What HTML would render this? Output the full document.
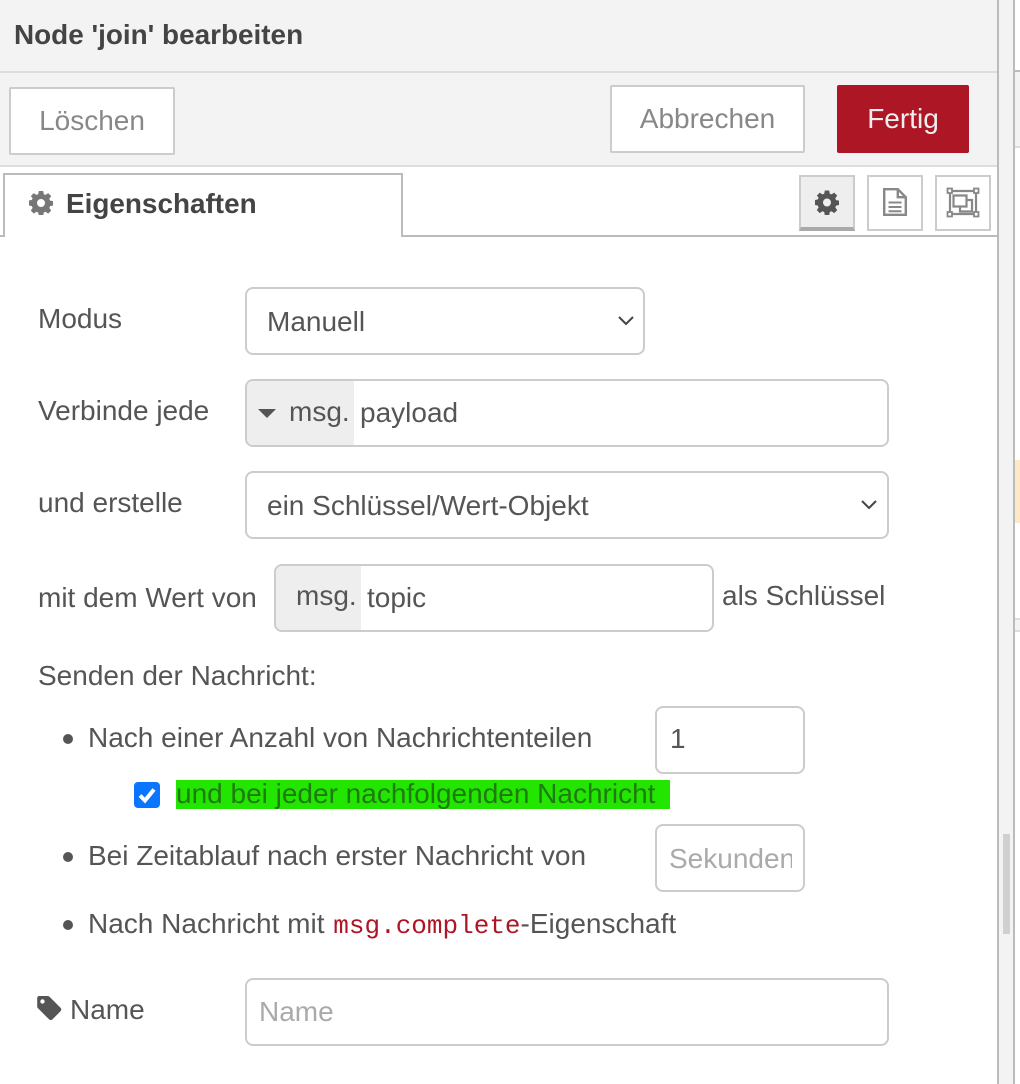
<!DOCTYPE html>
<html><head><meta charset="utf-8"><style>
html,body{margin:0;padding:0;background:#fff}
#r{position:relative;width:1020px;height:1084px;overflow:hidden;background:#fff;font-family:"Liberation Sans",sans-serif;font-size:28px;color:#555}
#r div,#r svg,#r span.a{position:absolute;box-sizing:border-box}
.t{white-space:nowrap;line-height:32px}
.box{border:2px solid #ccc;border-radius:8px;background:#fff}
.btn{border:2px solid #ccc;background:#fff;color:#888;text-align:center;border-radius:2px}
.tb{border:2px solid #ccc;background:#fff;width:56px;height:56px;top:175px}
</style></head><body><div id="r">
<div style="left:0;top:0;width:997px;height:166px;background:#f3f3f3"></div>
<div style="left:0;top:71px;width:997px;height:2px;background:#ddd"></div>
<div style="left:0;top:165px;width:997px;height:2px;background:#ddd"></div>
<div class="t" style="left:14px;top:19px;font-weight:bold;font-size:27.9px;color:#444">Node 'join' bearbeiten</div>
<div class="btn t" style="left:9px;top:87px;width:166px;height:68px;line-height:64px">Löschen</div>
<div class="btn t" style="left:610px;top:85px;width:195px;height:68px;line-height:64px">Abbrechen</div>
<div class="t" style="left:837px;top:85px;width:132px;height:68px;line-height:68px;background:#ad1625;color:#eee;text-align:center;border-radius:2px">Fertig</div>

<div style="left:0;top:235px;width:997px;height:2px;background:#bbb"></div>
<div style="left:3px;top:173px;width:400px;height:64px;border:2px solid #bbb;border-bottom:none;background:#fff"></div>
<svg style="left:29px;top:191px" width="24" height="24" viewBox="0 0 24 24"><path fill="#777" fill-rule="evenodd" d="M9.8 0h4.400l.6 3.200 1.700.7 2.700-1.800 3 3-1.900 2.700.8 1.800 3 .6v4.300l-3 .6-.8 1.800 1.900 2.700-3 3-2.700-1.900-1.700.8-.6 3H9.800l-.6-3-1.800-.8-2.600 1.900-3-3 1.800-2.700-.7-1.800-3-.6V9.500l3-.6.7-1.800L1.800 5.100l3-3 2.600 1.800 1.800-.7zM12 8a4 4 0 1 0 0 8 4 4 0 0 0 0-8z"/></svg>
<div class="t" style="left:66px;top:188px;font-weight:bold;font-size:27.9px;color:#444">Eigenschaften</div>

<div class="tb" style="left:799px;background:#eee;border-bottom:4px solid #aaa"></div>
<svg style="left:815px;top:190px" width="24" height="25" viewBox="0 0 24 24"><path fill="#555" fill-rule="evenodd" d="M9.800 0h4.400l.6 3.200 1.700.7 2.700-1.800 3 3-1.900 2.700.8 1.800 3 .6v4.300l-3 .6-.8 1.800 1.900 2.700-3 3-2.700-1.900-1.700.8-.6 3H9.800l-.6-3-1.800-.8-2.600 1.900-3-3 1.800-2.700-.7-1.800-3-.6V9.500l3-.6.7-1.800L1.800 5.100l3-3 2.600 1.800 1.800-.7zM12 8a4 4 0 1 0 0 8 4 4 0 0 0 0-8z"/></svg>
<div class="tb" style="left:867px"></div>
<svg style="left:882px;top:187px" width="26" height="30" viewBox="0 0 26 30" fill="none" stroke="#888" stroke-width="2.400"><path d="M2.200 2.200h13.600l8 8v17.600H2.200zM15.800 2.200v8h8"/><path d="M6.500 15.500h13M6.500 20h13M6.500 24.200h13" stroke-width="2"/></svg>
<div class="tb" style="left:935px"></div>
<svg style="left:946px;top:187px" width="34" height="31" viewBox="0 0 34 31" fill="none" stroke="#888" stroke-width="2.200"><path d="M4 4h26v23H4z"/><path d="M7.500 8.500h13v11h-13z"/><path d="M14 19.500v5h12V13h-5.500"/><g fill="#fff" stroke-width="1.800"><rect x="1.500" y="1.500" width="4.500" height="4.500"/><rect x="28" y="1.500" width="4.500" height="4.500"/><rect x="1.500" y="25" width="4.500" height="4.500"/><rect x="28" y="25" width="4.500" height="4.500"/></g></svg>

<div class="t" style="left:38px;top:303px">Modus</div>
<div class="box t" style="left:245px;top:287px;width:400px;height:68px;padding-left:20px;line-height:66px">Manuell</div>
<svg style="left:617px;top:315px" width="18" height="12" viewBox="0 0 18 12" fill="none" stroke="#444" stroke-width="2"><path d="M2 2l7 7 7-7"/></svg>

<div class="t" style="left:38px;top:395px">Verbinde jede</div>
<div class="box t" style="left:245px;top:379px;width:644px;height:68px;padding-left:113px;line-height:64px">payload</div>
<div style="left:247px;top:381px;width:107px;height:64px;background:#eee;border-radius:6px 0 0 6px"></div>
<svg style="left:258px;top:408px" width="18" height="11" viewBox="0 0 18 11"><path fill="#555" d="M0 1h18L9 10z"/></svg>
<div class="t" style="left:289px;top:396px">msg.</div>

<div class="t" style="left:38px;top:487px">und erstelle</div>
<div class="box t" style="left:245px;top:471px;width:644px;height:68px;padding-left:20px;line-height:66px">ein Schlüssel/Wert-Objekt</div>
<svg style="left:860px;top:499px" width="18" height="12" viewBox="0 0 18 12" fill="none" stroke="#444" stroke-width="2"><path d="M2 2l7 7 7-7"/></svg>

<div class="t" style="left:38px;top:582px">mit dem Wert von</div>
<div class="box t" style="left:274px;top:564px;width:440px;height:68px;padding-left:91px;line-height:63px">topic</div>
<div style="left:276px;top:566px;width:85px;height:64px;background:#eee;border-radius:6px 0 0 6px"></div>
<div class="t" style="left:296px;top:580px">msg.</div>
<div class="t" style="left:722px;top:580px">als Schlüssel</div>

<div class="t" style="left:38px;top:660px">Senden der Nachricht:</div>

<div style="left:63px;top:734px;width:10px;height:10px;border-radius:50%;background:#555"></div>
<div class="t" style="left:88px;top:722px">Nach einer Anzahl von Nachrichtenteilen</div>
<div class="box t" style="left:655px;top:706px;width:150px;height:68px;padding-left:13px;line-height:62px">1</div>

<div style="left:134px;top:782px;width:26px;height:26px;background:#0a75ff;border-radius:4px"></div>
<svg style="left:134px;top:782px" width="26" height="26" viewBox="0 0 26 26" fill="none" stroke="#fff" stroke-width="4"><path d="M6 13.500l5 5 9-11"/></svg>
<div class="t" style="left:176px;top:780px;width:494px;height:29px;line-height:28px;background:#23e600;color:#1f7a10">und bei jeder nachfolgenden Nachricht</div>

<div style="left:63px;top:852px;width:10px;height:10px;border-radius:50%;background:#555"></div>
<div class="t" style="left:88px;top:840px">Bei Zeitablauf nach erster Nachricht von</div>
<div class="box" style="left:655px;top:824px;width:150px;height:68px"></div>
<div class="t" style="left:669px;top:843px;width:123px;overflow:hidden;color:#aaa">Sekunden</div>

<div style="left:63px;top:920px;width:10px;height:10px;border-radius:50%;background:#555"></div>
<div class="t" style="left:88px;top:908px">Nach Nachricht mit <span style="font-family:'Liberation Mono',monospace;font-size:26px;color:#ad1625;margin-left:1px">msg.complete</span>-Eigenschaft</div>

<svg style="left:37px;top:996px" width="25" height="25" viewBox="0 0 25 25"><path fill="#555" fill-rule="evenodd" d="M2 0h8.500c.8 0 1.500.3 2 .8l11 11c1 1 1 2.500 0 3.500l-8 8c-1 1-2.500 1-3.500 0l-11-11c-.5-.5-.8-1.200-.8-2V2c0-1.100.9-2 2-2zM5.500 3.300a2.200 2.200 0 1 0 0 4.400 2.200 2.200 0 0 0 0-4.400z"/></svg>
<div class="t" style="left:70px;top:994px">Name</div>
<div class="box" style="left:245px;top:978px;width:644px;height:68px"></div>
<div class="t" style="left:259px;top:996px;color:#aaa">Name</div>

<div style="left:997px;top:0;width:18px;height:1084px;background:#f3f3f3;border-left:2px solid #bbb;border-right:2px solid #bbb"></div>
<div style="left:1003px;top:834px;width:7px;height:100px;background:#d0d0d0"></div>
<div style="left:1015px;top:70px;width:5px;height:2px;background:#bbb"></div>
<div style="left:1015px;top:72px;width:5px;height:75px;background:#f3f3f3"></div>
<div style="left:1015px;top:146px;width:5px;height:2px;background:#ddd"></div>
<div style="left:1015px;top:460px;width:5px;height:63px;background:#ffe8c4"></div>
<div style="left:1015px;top:618px;width:5px;height:14px;background:#f3f3f3;border-top:2px solid #ddd;border-bottom:2px solid #ddd"></div>
</div></body></html>
